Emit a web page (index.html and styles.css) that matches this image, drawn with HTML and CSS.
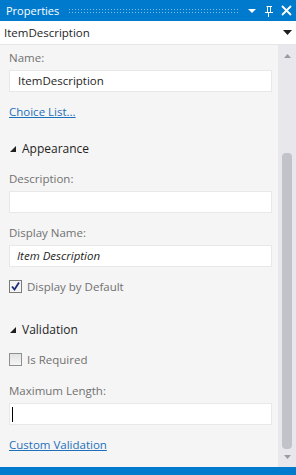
FILE: index.html
```html
<!DOCTYPE html>
<html>
<head>
<meta charset="utf-8">
<link rel="stylesheet" href="styles.css">
</head>
<body>
<div class="window">
  <div class="titlebar">
    <span class="title">Properties</span>
    <span class="grip"></span>
    <span class="tb-icons">
      <svg width="10" height="6" viewBox="0 0 10 6"><path d="M1 1h8L5 5z" fill="#fff"/></svg>
      <svg width="10" height="12" viewBox="0 0 10 12"><path d="M3 1h5v1h-1v5h2v1h-4v4h-1v-4h-3v-1h2v-5h-1z M4 2v5h2v-5z" fill="#fff"/></svg>
      <svg width="11" height="11" viewBox="0 0 11 11"><path d="M1 1l9 9M10 1l-9 9" stroke="#fff" stroke-width="1.8"/></svg>
    </span>
  </div>
  <div class="selector">
    <span>ItemDescription</span>
    <svg width="9" height="5" viewBox="0 0 9 5"><path d="M0 0h9L4.5 5z" fill="#1e1e1e"/></svg>
  </div>
  <div class="body">
    <div class="content">
      <div class="label">Name:</div>
      <div class="field">ItemDescription</div>
      <a class="link first-link">Choice List...</a>

      <div class="section">
        <svg width="6" height="6" viewBox="0 0 6 6"><path d="M6 0v6H0z" fill="#1e1e1e"/></svg>
        <span>Appearance</span>
      </div>
      <div class="label">Description:</div>
      <div class="field"></div>
      <div class="label">Display Name:</div>
      <div class="field italic">Item Description</div>
      <div class="check">
        <span class="box checked">
          <svg width="11" height="11" viewBox="0 0 11 11"><path d="M2 5.5l2.5 3L9 1.5" stroke="#1c2a7a" stroke-width="1.8" fill="none"/></svg>
        </span>
        <span>Display by Default</span>
      </div>

      <div class="section">
        <svg width="6" height="6" viewBox="0 0 6 6"><path d="M6 0v6H0z" fill="#1e1e1e"/></svg>
        <span>Validation</span>
      </div>
      <div class="check">
        <span class="box"></span>
        <span>Is Required</span>
      </div>
      <div class="label">Maximum Length:</div>
      <div class="field"><span class="caret"></span></div>
      <a class="link">Custom Validation</a>
    </div>
    <div class="scrollbar">
      <svg class="arrow" width="7" height="4" viewBox="0 0 7 4"><path d="M0 4L3.5 0L7 4z" fill="#9a9aa6"/></svg>
      <div class="track"><div class="thumb"></div></div>
      <svg class="arrow" width="7" height="4" viewBox="0 0 7 4"><path d="M0 0h7L3.5 4z" fill="#9a9aa6"/></svg>
    </div>
  </div>
  <div class="bottom"></div>
</div>
</body>
</html>
```
FILE: styles.css
```css
* { box-sizing: border-box; }
html, body { margin: 0; padding: 0; }
body {
  width: 296px;
  height: 475px;
  overflow: hidden;
  font-family: "Open Sans", "Noto Sans", sans-serif;
  font-size: 11.5px;
  background: #f5f5f5;
}
.window {
  display: flex;
  flex-direction: column;
  height: 475px;
}
.titlebar {
  height: 21px;
  flex: none;
  background: #007acc;
  color: #fff;
  display: flex;
  align-items: center;
  padding: 0 4px 0 6px;
}
.title { font-size: 11px; }
.grip {
  flex: 1;
  height: 5px;
  margin: 0 9px 0 9px;
  background-image: radial-gradient(circle, rgba(255,255,255,0.5) 0.6px, transparent 0.8px);
  background-size: 3px 3px;
}
.tb-icons {
  display: flex;
  align-items: center;
  gap: 7px;
}
.selector {
  height: 24px;
  flex: none;
  background: #fff;
  display: flex;
  align-items: center;
  justify-content: space-between;
  padding: 0 4px 0 4px;
  color: #1e1e1e;
  border-bottom: 1px solid #e6e6e6;
}
.body {
  flex: 1;
  display: flex;
  min-height: 0;
}
.content {
  flex: 1;
  display: flex;
  flex-direction: column;
  align-items: flex-start;
  padding: 4px 6px 0 9px;
}
.label {
  color: #717171;
  line-height: 17px;
}
.field {
  align-self: stretch;
  height: 22px;
  background: #fff;
  border: 1px solid #e8e8e8;
  margin-top: 4px;
  margin-bottom: 4px;
  padding: 0 8px;
  line-height: 20px;
  color: #1e1e1e;
  display: flex;
  align-items: center;
}
.field + .label { margin-top: 7px; }
.italic { font-style: italic; padding-left: 7px; }
.caret {
  width: 1px;
  height: 15px;
  background: #000;
  margin-left: -6px;
}
.link {
  color: #1e70bb;
  text-decoration: underline;
  line-height: 17px;
  margin-top: 7px;
  margin-bottom: 10px;
}
.first-link { margin-bottom: 20px; }
.section {
  display: flex;
  align-items: center;
  gap: 6px;
  line-height: 17px;
  color: #1e1e1e;
  margin-bottom: 13px;
  font-size: 12px;
}
.section svg { margin-left: 1px; }
.check {
  display: flex;
  align-items: center;
  gap: 5px;
  color: #717171;
  line-height: 17px;
  margin-top: 7px;
  margin-bottom: 26px;
}
.section + .check { margin-top: 0; }
.check + .label { margin-top: -12px; }
.box {
  width: 13px;
  height: 13px;
  border: 1px solid #8e8f8f;
  background: linear-gradient(#e3e3e3, #f5f5f5);
  display: flex;
  align-items: center;
  justify-content: center;
}
.box.checked { background: #f4f4f4; border-color: #7a7a7a; }
.scrollbar {
  width: 18px;
  background: #e8e8ec;
  display: flex;
  flex-direction: column;
  align-items: center;
  padding: 9px 0 8px;
}
.arrow { flex: none; }
.track {
  flex: 1;
  width: 100%;
  display: flex;
  flex-direction: column;
  justify-content: flex-end;
  padding: 4px 4px 6px 4px;
}
.thumb {
  height: 296px;
  background: #c2c3c9;
  border-radius: 4px;
}
.bottom {
  height: 8px;
  flex: none;
  background: #007acc;
}
```
